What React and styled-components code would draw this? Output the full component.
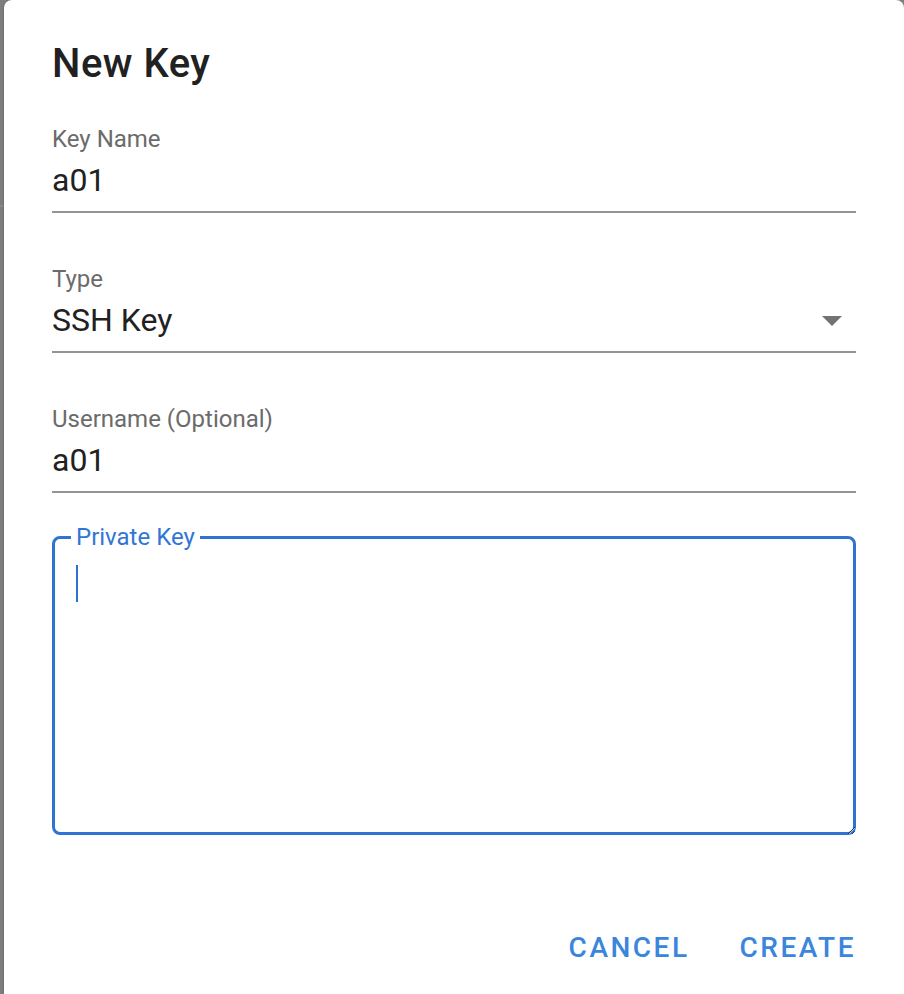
import React from "react";
import styled, { createGlobalStyle } from "styled-components";

const GlobalStyle = createGlobalStyle`
  html, body {
    margin: 0;
    padding: 0;
    overflow: hidden;
  }
  body {
    background: #7e7e7e;
    font-family: Roboto, "Liberation Sans", Arial, sans-serif;
    -webkit-font-smoothing: antialiased;
  }
  * { box-sizing: border-box; }
`;

const Page = styled.div`
  display: flex;
  min-height: 994px;
  padding-left: 4px;
  background: linear-gradient(
    to bottom,
    #7e7e7e 0,
    #7e7e7e 205px,
    #8a8a8a 205px,
    #8a8a8a 207px,
    #7e7e7e 207px
  );
`;

const Dialog = styled.div`
  width: 900px;
  background: #fff;
  border-radius: 8px 8px 0 0;
  display: flex;
  flex-direction: column;
  box-shadow: -1px 0 2px rgba(0, 0, 0, 0.12);
`;

const Title = styled.h2`
  margin: 0;
  padding: 32px 48px 0;
  font-size: 40px;
  line-height: 64px;
  font-weight: 500;
  letter-spacing: 0.5px;
  color: #212121;
`;

const Body = styled.div`
  display: flex;
  flex-direction: column;
  padding: 23px 48px 0;
`;

const Fields = styled.div`
  display: flex;
  flex-direction: column;
  gap: 46px;
`;

const Field = styled.div`
  display: flex;
  flex-direction: column;
  padding-bottom: 11px;
  border-bottom: 2px solid #949494;
`;

const Label = styled.label`
  font-size: 24px;
  line-height: 40px;
  color: #6b6b6b;
`;

const InputRow = styled.div`
  display: flex;
  align-items: center;
  height: 40px;
  margin-top: 1px;
`;

const Input = styled.input`
  flex: 1;
  min-width: 0;
  height: 40px;
  margin: 0;
  padding: 0;
  border: none;
  outline: none;
  background: transparent;
  font-family: inherit;
  font-size: 32px;
  line-height: 40px;
  color: #212121;
`;

const SelectValue = styled.div`
  flex: 1;
  font-size: 32px;
  line-height: 40px;
  color: #212121;
`;

const Arrow = styled.svg`
  flex: none;
  display: block;
  fill: #737373;
`;

const Outline = styled.fieldset`
  margin: 32px 0 0;
  padding: 0;
  min-width: 0;
  border: 3px solid #2f74d2;
  border-radius: 8px;
`;

const Legend = styled.legend`
  margin-left: 16px;
  padding: 0 5px;
  font-size: 24px;
  line-height: 24px;
  color: #3276d3;
`;

const TextWrap = styled.div`
  position: relative;
  height: 283px;
`;

const TextArea = styled.textarea`
  display: block;
  width: calc(100% + 3px);
  height: calc(100% + 3px);
  margin: 0;
  padding: 15px 21px;
  border: none;
  outline: none;
  background: transparent;
  resize: vertical;
  font-family: inherit;
  font-size: 32px;
  line-height: 40px;
  color: #212121;
`;

const Caret = styled.span`
  position: absolute;
  left: 21px;
  top: 16px;
  width: 2px;
  height: 37px;
  background: #2f6fd0;
`;

const Actions = styled.div`
  display: flex;
  justify-content: flex-end;
  gap: 18px;
  margin-top: 77px;
  padding-right: 32px;
`;

const TextButton = styled.button`
  height: 72px;
  padding: 0 16px;
  border: none;
  background: none;
  font-family: inherit;
  font-size: 28px;
  line-height: 72px;
  font-weight: 500;
  letter-spacing: 2.5px;
  text-transform: uppercase;
  color: #3a86dd;
  cursor: pointer;
`;

export default function App() {
  return (
    <>
      <GlobalStyle />
      <Page>
        <Dialog>
          <Title>New Key</Title>
          <Body>
            <Fields>
              <Field>
                <Label>Key Name</Label>
                <InputRow>
                  <Input defaultValue="a01" />
                </InputRow>
              </Field>
              <Field>
                <Label>Type</Label>
                <InputRow>
                  <SelectValue>SSH Key</SelectValue>
                  <Arrow width="48" height="40" viewBox="0 2 24 20">
                    <path d="M7 10l5 5 5-5H7z" />
                  </Arrow>
                </InputRow>
              </Field>
              <Field>
                <Label>Username (Optional)</Label>
                <InputRow>
                  <Input defaultValue="a01" />
                </InputRow>
              </Field>
            </Fields>
            <Outline>
              <Legend>Private Key</Legend>
              <TextWrap>
                <TextArea />
                <Caret />
              </TextWrap>
            </Outline>
          </Body>
          <Actions>
            <TextButton>Cancel</TextButton>
            <TextButton>Create</TextButton>
          </Actions>
        </Dialog>
      </Page>
    </>
  );
}
